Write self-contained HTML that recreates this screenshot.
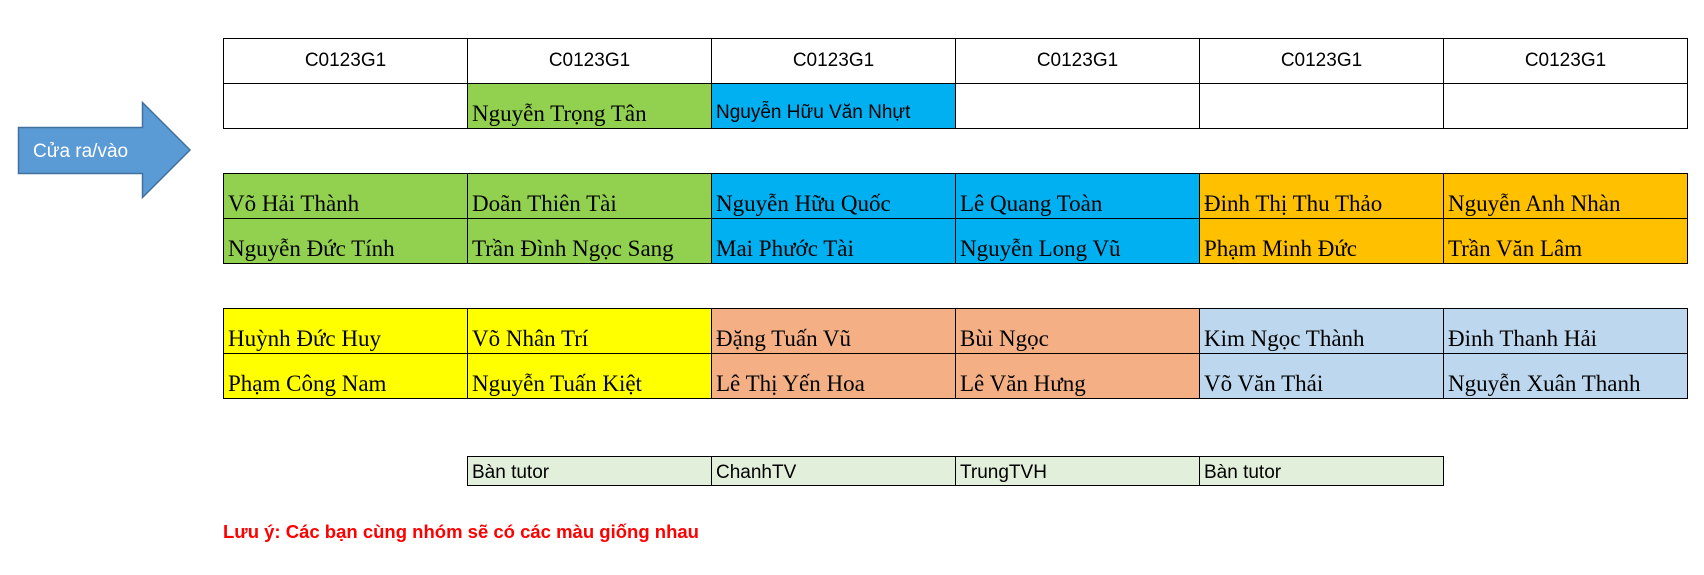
<!DOCTYPE html>
<html><head><meta charset="utf-8"><style>
body{margin:0;width:1704px;height:575px;background:#fff;position:relative;overflow:hidden}
.r{position:absolute;left:223px;display:flex}
.c{box-sizing:border-box;width:245px;height:46px;border:1px solid #000;margin-left:-1px;display:flex;align-items:flex-end;padding:0 0 1px 4px;font:23px "Liberation Serif",serif;color:#000;white-space:nowrap;overflow:hidden}
.c:first-child{margin-left:0}
.h{justify-content:center;align-items:center;padding:0;font:19px "Liberation Sans",sans-serif}
.s{font:19px "Liberation Sans",sans-serif;padding-bottom:4px}
.g{background:#92D050}.b{background:#00B0F0}.o{background:#FFC000}.y{background:#FFFF00}.p{background:#F4B084}.l{background:#BDD7EE}.t{background:#E2EFDA}
</style></head><body>
<svg style="position:absolute;left:0;top:0" width="200" height="210">
<polygon points="18.5,127.5 142.5,127.5 142.5,102.5 190,150 142.5,197.5 142.5,173.5 18.5,173.5" fill="#5B9BD5" stroke="#41719C" stroke-width="1.5"/>
<text x="33" y="157" font-family="Liberation Sans, sans-serif" font-size="19" fill="#fff">Cửa ra/vào</text>
</svg>
<div class="r" style="top:38px"><div class="c h">C0123G1</div><div class="c h">C0123G1</div><div class="c h">C0123G1</div><div class="c h">C0123G1</div><div class="c h">C0123G1</div><div class="c h">C0123G1</div></div>
<div class="r" style="top:83px"><div class="c"></div><div class="c g">Nguyễn Trọng Tân</div><div class="c b s">Nguyễn Hữu Văn Nhựt</div><div class="c"></div><div class="c"></div><div class="c"></div></div>
<div class="r" style="top:173px"><div class="c g">Võ Hải Thành</div><div class="c g">Doãn Thiên Tài</div><div class="c b">Nguyễn Hữu Quốc</div><div class="c b">Lê Quang Toàn</div><div class="c o">Đinh Thị Thu Thảo</div><div class="c o">Nguyễn Anh Nhàn</div></div>
<div class="r" style="top:218px"><div class="c g">Nguyễn Đức Tính</div><div class="c g">Trần Đình Ngọc Sang</div><div class="c b">Mai Phước Tài</div><div class="c b">Nguyễn Long Vũ</div><div class="c o">Phạm Minh Đức</div><div class="c o">Trần Văn Lâm</div></div>
<div class="r" style="top:308px"><div class="c y">Huỳnh Đức Huy</div><div class="c y">Võ Nhân Trí</div><div class="c p">Đặng Tuấn Vũ</div><div class="c p">Bùi Ngọc</div><div class="c l">Kim Ngọc Thành</div><div class="c l">Đinh Thanh Hải</div></div>
<div class="r" style="top:353px"><div class="c y">Phạm Công Nam</div><div class="c y">Nguyễn Tuấn Kiệt</div><div class="c p">Lê Thị Yến Hoa</div><div class="c p">Lê Văn Hưng</div><div class="c l">Võ Văn Thái</div><div class="c l">Nguyễn Xuân Thanh</div></div>
<div class="r" style="top:456px;left:467px"><div class="c t s" style="height:30px;padding-bottom:1px">Bàn tutor</div><div class="c t s" style="height:30px;padding-bottom:1px">ChanhTV</div><div class="c t s" style="height:30px;padding-bottom:1px">TrungTVH</div><div class="c t s" style="height:30px;padding-bottom:1px">Bàn tutor</div></div>
<div style="position:absolute;left:223px;top:521px;font:bold 18.5px 'Liberation Sans',sans-serif;color:#f00;white-space:nowrap">Lưu ý: Các bạn cùng nhóm sẽ có các màu giống nhau</div>
</body></html>
